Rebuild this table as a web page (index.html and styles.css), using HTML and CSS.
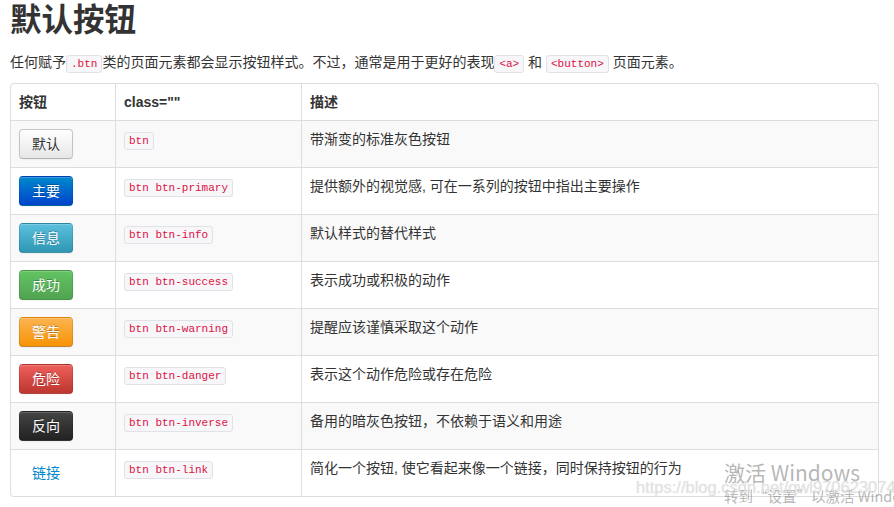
FILE: index.html
```html
<!DOCTYPE html>
<html lang="zh-CN">
<head>
<meta charset="utf-8">
<title>默认按钮</title>
<link rel="stylesheet" href="styles.css">
</head>
<body>
<div class="page">
  <h2 class="title">默认按钮</h2>
  <p class="intro">任何赋予<code>.btn</code>类的页面元素都会显示按钮样式。不过，通常是用于更好的表现<code>&lt;a&gt;</code> 和 <code>&lt;button&gt;</code> 页面元素。</p>
  <table class="tbl">
    <thead>
      <tr><th class="c1">按钮</th><th class="c2">class=""</th><th>描述</th></tr>
    </thead>
    <tbody>
      <tr><td><button class="btn">默认</button></td><td><code>btn</code></td><td>带渐变的标准灰色按钮</td></tr>
      <tr><td><button class="btn btn-primary">主要</button></td><td><code>btn btn-primary</code></td><td>提供额外的视觉感, 可在一系列的按钮中指出主要操作</td></tr>
      <tr><td><button class="btn btn-info">信息</button></td><td><code>btn btn-info</code></td><td>默认样式的替代样式</td></tr>
      <tr><td><button class="btn btn-success">成功</button></td><td><code>btn btn-success</code></td><td>表示成功或积极的动作</td></tr>
      <tr><td><button class="btn btn-warning">警告</button></td><td><code>btn btn-warning</code></td><td>提醒应该谨慎采取这个动作</td></tr>
      <tr><td><button class="btn btn-danger">危险</button></td><td><code>btn btn-danger</code></td><td>表示这个动作危险或存在危险</td></tr>
      <tr><td><button class="btn btn-inverse">反向</button></td><td><code>btn btn-inverse</code></td><td>备用的暗灰色按钮，不依赖于语义和用途</td></tr>
      <tr><td><button class="btn btn-link">链接</button></td><td><code>btn btn-link</code></td><td>简化一个按钮, 使它看起来像一个链接，同时保持按钮的行为</td></tr>
    </tbody>
  </table>
</div>
<div class="activate">
  <div class="act-title">激活 Windows</div>
  <div class="act-sub">转到“设置”以激活 Windows</div>
</div>
<div class="url-mark">https://blog.csdn.net/qwl970623074</div>
</body>
</html>
```

FILE: styles.css
```css
html, body {
  margin: 0;
  padding: 0;
  background: #fff;
}
body {
  font-family: "Liberation Sans", "Noto Sans CJK SC", sans-serif;
  font-size: 14px;
  line-height: 20px;
  color: #333;
  overflow: hidden;
}
.page {
  padding: 0 15px 0 10px;
}
.title {
  margin: 0;
  font-size: 31.5px;
  line-height: 40px;
  font-weight: bold;
  color: #333;
}
.intro {
  margin: 12px 0 9px;
}
code {
  font-family: "Liberation Mono", "DejaVu Sans Mono", monospace;
  font-size: 11px;
  color: #d14;
  background: #f7f7f9;
  border: 1px solid #e1e1e8;
  border-radius: 3px;
  padding: 2px 4px;
}
.tbl {
  width: 100%;
  border-collapse: separate;
  border-spacing: 0;
  border: 1px solid #ddd;
  border-left: 0;
  border-radius: 4px;
}
.tbl th, .tbl td {
  padding: 8px;
  text-align: left;
  vertical-align: top;
  line-height: 20px;
  border-left: 1px solid #ddd;
  border-top: 1px solid #ddd;
}
.tbl thead th {
  border-top: 0;
  font-weight: bold;
}
.tbl .c1 { width: 88px; }
.tbl .c2 { width: 169px; }
.tbl tbody tr:nth-child(odd) td {
  background: #f9f9f9;
}
.tbl thead th:first-child { border-top-left-radius: 4px; }
.tbl tbody tr:last-child td:first-child { border-bottom-left-radius: 4px; }
.btn {
  display: inline-block;
  font-family: "Liberation Sans", "Noto Sans CJK SC", sans-serif;
  font-size: 14px;
  line-height: 20px;
  padding: 4px 12px;
  margin: 0;
  color: #333;
  text-shadow: 0 1px 1px rgba(255,255,255,.75);
  background: linear-gradient(#ffffff, #e6e6e6);
  border: 1px solid #c5c5c5;
  border-bottom-color: #b3b3b3;
  border-radius: 4px;
  box-shadow: inset 0 1px 0 rgba(255,255,255,.2), 0 1px 2px rgba(0,0,0,.05);
  vertical-align: middle;
}
.btn-primary, .btn-info, .btn-success, .btn-warning, .btn-danger, .btn-inverse {
  color: #fff;
  text-shadow: 0 -1px 0 rgba(0,0,0,.25);
  border-color: rgba(0,0,0,.1) rgba(0,0,0,.1) rgba(0,0,0,.25);
}
.btn-primary { background: linear-gradient(#0088cc, #0044cc); }
.btn-info { background: linear-gradient(#5bc0de, #2f96b4); }
.btn-success { background: linear-gradient(#62c462, #51a351); }
.btn-warning { background: linear-gradient(#fbb450, #f89406); }
.btn-danger { background: linear-gradient(#ee5f5b, #bd362f); }
.btn-inverse { background: linear-gradient(#444444, #222222); }
.btn-link {
  color: #0088cc;
  background: transparent;
  border-color: transparent;
  box-shadow: none;
  text-shadow: none;
}
.activate {
  position: absolute;
  left: 724px;
  top: 458px;
  white-space: nowrap;
  color: rgba(120,120,120,.55);
  font-family: "Noto Sans CJK SC", "Liberation Sans", sans-serif;
}
.act-title {
  font-size: 21px;
  line-height: 28px;
}
.act-sub {
  font-size: 14.5px;
  line-height: 18px;
  margin-top: 1px;
}
.url-mark {
  position: absolute;
  left: 636px;
  top: 477px;
  white-space: nowrap;
  font-family: "Liberation Sans", sans-serif;
  font-size: 16.5px;
  line-height: 20px;
  color: rgba(225,225,225,.8);
  text-shadow: 0 0 1px rgba(180,180,180,.4);
}
```
